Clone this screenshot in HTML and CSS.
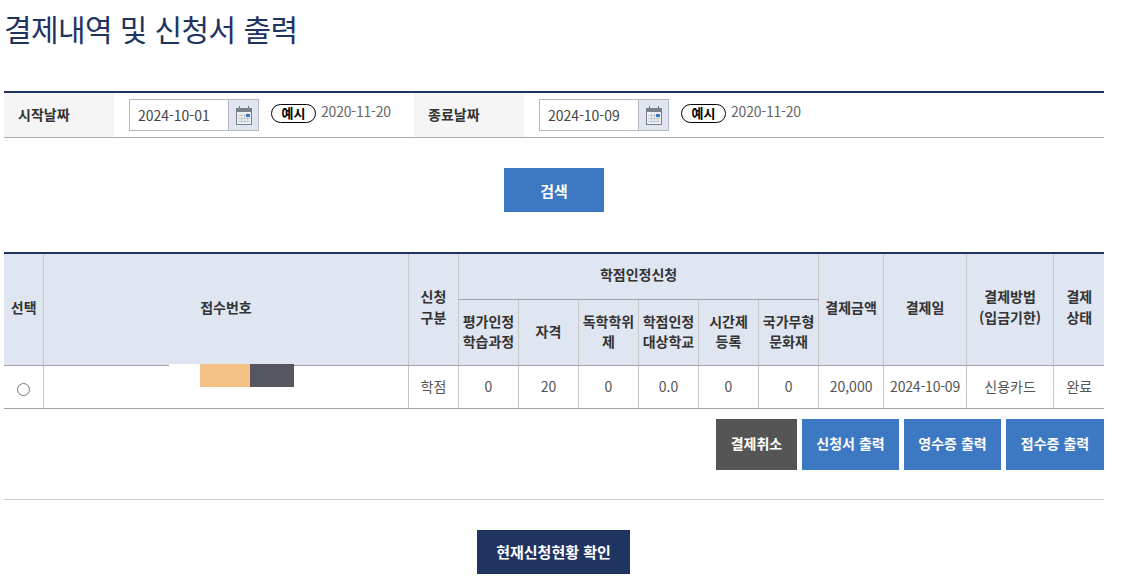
FILE: index.html
```html
<!DOCTYPE html>
<html lang="ko">
<head>
<meta charset="utf-8">
<title>결제내역 및 신청서 출력</title>
<link rel="stylesheet" href="styles.css">
</head>
<body>
<main class="page">
  <h1 class="title">결제내역 및 신청서 출력</h1>
  <form class="search">
    <div class="label">시작날짜</div>
    <div class="field">
      <div class="date"><span class="date-value">2024-10-01</span><span class="cal"><svg width="18" height="19" viewBox="0 0 18 19"><path d="M4.5 0v4M13.5 0v4" stroke="#6b7280" stroke-width="1" fill="none"/><rect x="1.5" y="2.500" width="15" height="16" fill="#eef0f4" stroke="#7b8088"/><rect x="1" y="2" width="16" height="4" fill="#7b8088"/><path d="M3 9.500h12M3 12.500h12M3 15.500h12M6.500 7.500v9M9.500 7.500v9M12.500 7.500v9" stroke="#c5c9d2" stroke-width="1" fill="none"/><rect x="11" y="8" width="4" height="3" fill="#3d78c2"/></svg></span></div>
      <span class="hint-badge">예시</span><span class="hint">2020-11-20</span>
    </div>
    <div class="label">종료날짜</div>
    <div class="field">
      <div class="date"><span class="date-value">2024-10-09</span><span class="cal"><svg width="18" height="19" viewBox="0 0 18 19"><path d="M4.5 0v4M13.5 0v4" stroke="#6b7280" stroke-width="1" fill="none"/><rect x="1.5" y="2.500" width="15" height="16" fill="#eef0f4" stroke="#7b8088"/><rect x="1" y="2" width="16" height="4" fill="#7b8088"/><path d="M3 9.500h12M3 12.500h12M3 15.500h12M6.500 7.500v9M9.500 7.500v9M12.500 7.500v9" stroke="#c5c9d2" stroke-width="1" fill="none"/><rect x="11" y="8" width="4" height="3" fill="#3d78c2"/></svg></span></div>
      <span class="hint-badge">예시</span><span class="hint">2020-11-20</span>
    </div>
  </form>
  <div class="search-actions"><button type="button" class="btn btn-blue btn-search">검색</button></div>

  <div class="table-wrap">
    <table class="grid">
      <colgroup>
        <col class="c39"><col class="c365"><col class="c50"><col class="c60"><col class="c60"><col class="c60"><col class="c60"><col class="c60"><col class="c60"><col class="c65"><col class="c83"><col class="c87"><col class="c51">
      </colgroup>
      <thead>
        <tr class="row-a">
          <th rowspan="2">선택</th>
          <th rowspan="2">접수번호</th>
          <th rowspan="2">신청<br>구분</th>
          <th colspan="6">학점인정신청</th>
          <th rowspan="2">결제금액</th>
          <th rowspan="2">결제일</th>
          <th rowspan="2">결제방법<br>(입금기한)</th>
          <th rowspan="2">결제<br>상태</th>
        </tr>
        <tr class="row-b">
          <th>평가인정<br>학습과정</th>
          <th>자격</th>
          <th>독학학위<br>제</th>
          <th>학점인정<br>대상학교</th>
          <th>시간제<br>등록</th>
          <th>국가무형<br>문화재</th>
        </tr>
      </thead>
      <tbody>
        <tr class="row-c">
          <td><span class="radio"></span></td>
          <td></td>
          <td>학점</td>
          <td>0</td>
          <td>20</td>
          <td>0</td>
          <td>0.0</td>
          <td>0</td>
          <td>0</td>
          <td>20,000</td>
          <td class="td-date">2024-10-09</td>
          <td>신용카드</td>
          <td>완료</td>
        </tr>
      </tbody>
    </table>
    <div class="mask"><span class="mask-white"></span><span class="mask-orange"></span><span class="mask-dark"></span></div>
  </div>

  <div class="row-actions">
    <button type="button" class="btn btn-gray btn-w81">결제취소</button>
    <button type="button" class="btn btn-blue btn-w97">신청서 출력</button>
    <button type="button" class="btn btn-blue btn-w97">영수증 출력</button>
    <button type="button" class="btn btn-blue btn-w98">접수증 출력</button>
  </div>
  <div class="divider"></div>
  <div class="bottom-actions"><button type="button" class="btn btn-navy btn-status">현재신청현황 확인</button></div>
</main>
</body>
</html>
```
FILE: styles.css
```css
* { box-sizing: border-box; }
html, body { margin: 0; padding: 0; background: #fff; }
body {
  font-family: "Noto Sans CJK KR", "Noto Sans", sans-serif;
  font-size: 14px;
  color: #333;
  overflow: hidden;
}
.page { width: 1100px; margin-left: 4px; }
.title {
  margin: 0;
  padding-top: 6px;
  height: 91px;
  font-size: 30px;
  line-height: 44px;
  font-weight: 400;
  color: #1f3461;
  letter-spacing: -0.6px;
}
.search {
  display: grid;
  grid-template-columns: 110px 300px 110px 1fr;
  height: 47px;
  border-top: 2px solid #1f3461;
  border-bottom: 1px solid #aaa;
}
.label {
  background: #f5f5f5;
  font-weight: 700;
  color: #333;
  padding-left: 14px;
  line-height: 43px;
}
.field { display: flex; align-items: flex-start; padding: 6px 0 0 15px; }
.date {
  display: flex;
  width: 130px;
  height: 32px;
  border: 1px solid #b5b8c2;
  background: #fff;
}
.date-value { flex: 1; padding-left: 8px; line-height: 30px; color: #444; letter-spacing: -0.02px; }
.cal {
  width: 30px;
  background: #dfe5f1;
  border-left: 1px solid #b5b8c2;
  display: flex;
  align-items: center;
  justify-content: center;
}
.hint-badge {
  margin: 5px 0 0 12px;
  width: 45px;
  height: 19px;
  border: 1px solid #000;
  border-radius: 10px;
  color: #000;
  font-size: 13px;
  font-weight: 700;
  line-height: 15px;
  text-align: center;
}
.hint { margin: 2px 0 0 5px; color: #666; line-height: 20px; letter-spacing: -0.2px; }
.search-actions { display: flex; justify-content: center; padding-top: 30px; height: 114px; }
.btn {
  border: 0;
  padding: 0;
  font-family: inherit;
  font-size: 14px;
  font-weight: 700;
  color: #fff;
}
.btn-blue { background: #3d78c2; }
.btn-gray { background: #555; }
.btn-navy { background: #1f3461; }
.btn-search { width: 100px; height: 44px; font-size: 15px; }
.table-wrap { position: relative; }
.grid {
  width: 1100px;
  table-layout: fixed;
  border-collapse: collapse;
  border-top: 2px solid #1f3461;
}
.c39 { width: 39px; }
.c365 { width: 365px; }
.c50 { width: 50px; }
.c60 { width: 60px; }
.c65 { width: 65px; }
.c83 { width: 83px; }
.c87 { width: 87px; }
.c51 { width: 51px; }
.grid th, .grid td {
  border: 1px solid #c8c8c8;
  padding: 0 0 0 1px;
  text-align: center;
  line-height: 21px;
}
.grid th:first-child, .grid td:first-child { border-left: 0; }
.grid th:last-child, .grid td:last-child { border-right: 0; }
.grid th {
  background: #dfe5f1;
  font-weight: 700;
  color: #333;
  border-top: 0;
  border-bottom-color: #a0a2aa;
  padding-bottom: 4px;
}
.row-b th { padding: 0 0 2px 1px; line-height: 20px; }
.row-a th { vertical-align: middle; }
.row-a { height: 46px; }
.row-b { height: 66px; }
.row-c { height: 43px; }
.grid td { color: #555; border-top: 0; border-bottom-color: #a0a2aa; padding-bottom: 1px; }
.grid .td-date { letter-spacing: -0.2px; }
.radio {
  display: inline-block;
  width: 13px;
  height: 13px;
  margin-top: 3px;
  border: 1px solid #767676;
  border-radius: 50%;
  background: #fff;
  vertical-align: middle;
}
.mask { position: absolute; left: 165px; top: 112px; display: flex; height: 23px; }
.mask-white { width: 31px; height: 3px; background: #fff; }
.mask-orange { width: 50px; background: #f4c285; }
.mask-dark { width: 44px; background: #565660; }
.row-actions { display: flex; justify-content: flex-end; gap: 5px; padding-top: 10px; height: 61px; }
.btn-w81, .btn-w97, .btn-w98 { padding-bottom: 2px; }
.btn-w81 { width: 81px; }
.btn-w97 { width: 97px; }
.btn-w98 { width: 98px; }
.divider { height: 1px; margin-top: 29px; background: #ccc; }
.bottom-actions { display: flex; justify-content: center; padding-top: 30px; }
.btn-status { width: 153px; height: 44px; margin-right: 1px; font-size: 15px; }
```
